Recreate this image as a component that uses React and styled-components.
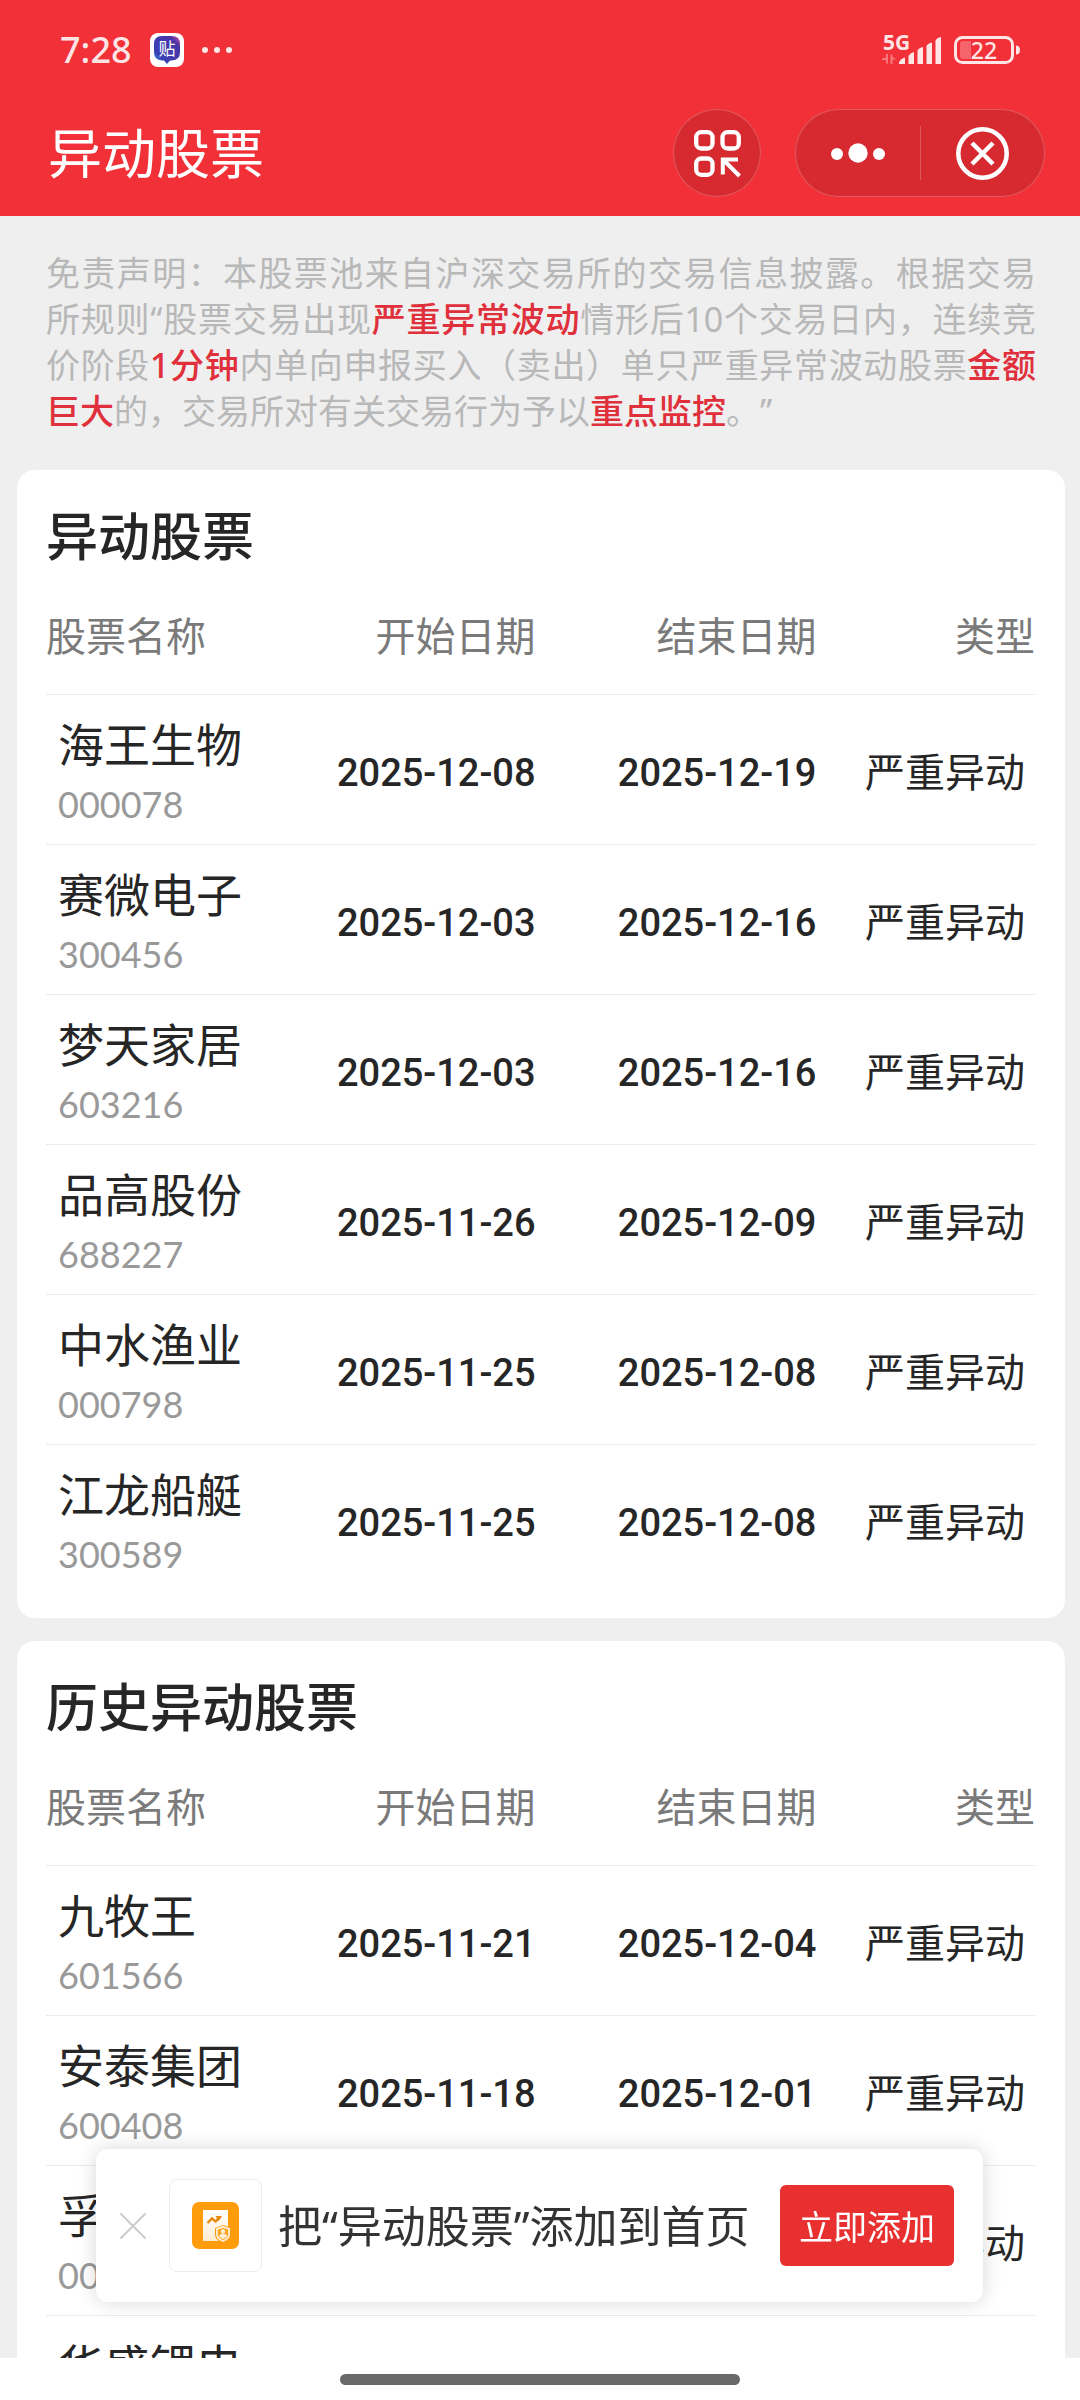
import styled, { createGlobalStyle } from "styled-components";

const GlobalStyle = createGlobalStyle`
  * {
    box-sizing: border-box;
  }

  body {
    margin: 0;
    background: #fff;
    color: #262626;
    font-family: "Noto Sans", "Noto Sans CJK SC", sans-serif;
    font-weight: 400;
  }

  button {
    border: none;
    padding: 0;
    background: none;
    color: inherit;
    font: inherit;
    cursor: pointer;
  }

  h1, h2, p {
    margin: 0;
  }

  svg {
    display: block;
    overflow: visible;
  }
`;

const Page = styled.div`
  height: 100vh;
  display: flex;
  flex-direction: column;
`;

const Header = styled.header`
  background: #f23038;
  color: #fff;
`;

const StatusBar = styled.div`
  display: flex;
  justify-content: space-between;
  align-items: center;
  height: 100px;
  padding: 0 60px;
  color: rgba(255, 255, 255, 0.88);
`;

const StatusGroup = styled.div`
  display: flex;
  align-items: center;
  gap: ${(props) => props.$gap}px;
`;

const Clock = styled.time`
  font-family: "Noto Sans", sans-serif;
  font-size: 36px;
  line-height: 48px;
  font-weight: 500;
`;

const TitleBar = styled.div`
  display: flex;
  align-items: center;
  height: 116px;
  padding: 0 35px 10px 48px;
`;

const PageTitle = styled.h1`
  flex: 1;
  font-size: 54px;
  line-height: 72px;
  font-weight: 400;
`;

const RoundButton = styled.button`
  display: grid;
  place-items: center;
  width: 88px;
  height: 88px;
  margin-right: 34px;
  border: 1px solid rgba(255, 255, 255, 0.22);
  border-radius: 50%;
  background: #d62a30;
`;

const Capsule = styled.div`
  display: flex;
  align-items: center;
  height: 88px;
  border: 1px solid rgba(255, 255, 255, 0.22);
  border-radius: 44px;
  background: #d62a30;
`;

const CapsuleButton = styled.button`
  display: grid;
  place-items: center;
  width: 124px;
  height: 54px;

  & + & {
    border-left: 1px solid rgba(255, 255, 255, 0.22);
  }
`;

const Content = styled.main`
  flex: 1;
  min-height: 0;
  overflow-y: auto;
  scrollbar-width: none;
  background: #efefef;
`;

const Disclaimer = styled.p`
  padding: 34px 44px 36px 46px;
  color: #b8b8b8;
  font-size: 34px;
  line-height: 46px;
  text-align: justify;
  text-spacing-trim: space-all;
`;

const NoBreak = styled.span`
  white-space: nowrap;
`;

const Highlight = styled.strong`
  color: #e0303c;
  font-weight: 500;
`;

const Card = styled.section`
  margin: 0 15px 23px 17px;
  padding: 30px 30px 24px 29px;
  border-radius: 18px;
  background: #fff;
`;

const CardTitle = styled.h2`
  font-size: 52px;
  line-height: 72px;
  font-weight: 500;
`;

const Table = styled.table`
  width: 100%;
  table-layout: fixed;
  border-collapse: separate;
  border-spacing: 0;
  white-space: nowrap;
`;

const Th = styled.th`
  width: ${(props) => props.$width};
  padding: 34px 0 28px;
  color: #7a7a7a;
  font-size: 40px;
  line-height: 60px;
  font-weight: 400;
  text-align: ${(props) => props.$align || "right"};
`;

const Td = styled.td`
  padding: 5px 0 0;
  border-top: 1px solid #ebebeb;
  font-size: 40px;
  line-height: 60px;
  text-align: right;
`;

const NameCell = styled(Td)`
  padding: 19px 0 10px 12px;
  text-align: left;
`;

const TypeCell = styled(Td)`
  padding-right: 10px;
`;

const StockName = styled.div`
  font-size: 46px;
`;

const StockCode = styled.div`
  color: #999;
  font-family: Lato, sans-serif;
  font-size: 36px;
`;

const DateText = styled.time`
  font-family: Roboto, sans-serif;
  font-size: 38px;
  font-weight: 500;
`;

const BottomArea = styled.footer`
  position: relative;
  display: flex;
  justify-content: center;
  height: 42px;
  padding-top: 16px;
  background: #fff;
`;

const HomeBar = styled.div`
  width: 37%;
  height: 11px;
  border-radius: 6px;
  background: #696969;
`;

const Toast = styled.div`
  position: absolute;
  left: 96px;
  right: 97px;
  bottom: 98px;
  display: flex;
  align-items: center;
  height: 153px;
  padding: 0 29px 0 24px;
  border-radius: 12px;
  background: #fff;
  box-shadow: 0 0 20px rgba(0, 0, 0, 0.16);
`;

const ToastIcon = styled.div`
  display: grid;
  place-items: center;
  width: 93px;
  height: 93px;
  margin: 0 16px 0 23px;
  border: 1px solid #ececec;
  border-radius: 8px;
`;

const ToastText = styled.p`
  flex: 1;
  color: #333;
  font-size: 44px;
  line-height: 60px;
  white-space: nowrap;
`;

const AddButton = styled.button`
  width: 174px;
  height: 81px;
  border-radius: 6px;
  background: #e83030;
  color: #fff;
  font-size: 34px;
`;

const currentStocks = [
  { name: "海王生物", code: "000078", start: "2025-12-08", end: "2025-12-19" },
  { name: "赛微电子", code: "300456", start: "2025-12-03", end: "2025-12-16" },
  { name: "梦天家居", code: "603216", start: "2025-12-03", end: "2025-12-16" },
  { name: "品高股份", code: "688227", start: "2025-11-26", end: "2025-12-09" },
  { name: "中水渔业", code: "000798", start: "2025-11-25", end: "2025-12-08" },
  { name: "江龙船艇", code: "300589", start: "2025-11-25", end: "2025-12-08" },
];

const historyStocks = [
  { name: "九牧王", code: "601566", start: "2025-11-21", end: "2025-12-04" },
  { name: "安泰集团", code: "600408", start: "2025-11-18", end: "2025-12-01" },
  { name: "孚日股份", code: "002083", start: "2025-11-17", end: "2025-11-28" },
  { name: "华盛锂电", code: "688353", start: "2025-11-17", end: "2025-11-28" },
];

function AppBadge() {
  return (
    <svg width="34" height="34" viewBox="0 0 34 34">
      <defs>
        <linearGradient id="bubble" x1="0" y1="1" x2="1" y2="0">
          <stop offset="0" stopColor="#2bb0f0" />
          <stop offset="0.25" stopColor="#3a3fb4" />
          <stop offset="0.8" stopColor="#4a35a8" />
          <stop offset="1" stopColor="#f0529a" />
        </linearGradient>
      </defs>
      <rect width="34" height="34" rx="8" fill="#fff" />
      <path
        d="M12 3h10q8 0 8 8v8q0 8-8 8.500h-2l-3 3.500-3-3.500h-2q-8-.5-8-8.500v-8q0-8 8-8z"
        fill="url(#bubble)"
      />
      <text x="17" y="22" fill="#fff" fontSize="17" textAnchor="middle">
        贴
      </text>
    </svg>
  );
}

function MoreDots() {
  return (
    <svg width="30" height="6" viewBox="0 0 30 6" fill="currentColor">
      <circle cx="3" cy="3" r="3" />
      <circle cx="15" cy="3" r="3" />
      <circle cx="27" cy="3" r="3" />
    </svg>
  );
}

function Signal() {
  return (
    <svg width="60" height="32" viewBox="0 0 60 32" fill="currentColor">
      <text
        x="1"
        y="16"
        fontFamily="Noto Sans, sans-serif"
        fontSize="21"
        fontWeight="700"
      >
        5G
      </text>
      <path
        d="M6 20v9.500H4v-3.500H0v-1.500L4 23.500V20zM8.500 30V20.500h1.800v2l3.700 3h-3.500V30z"
        opacity="0.4"
      />
      <path d="M17 28.500q1.500-4 6-5V30h-6zM26.500 22q1.500-3 5.500-4V30h-5.500zM35.500 16.500q1.500-3 5.500-3.500V30h-5.500zM44.500 12q1.500-3 5.500-3.500V30h-5.500zM53.500 6.500q1.500-3 5.500-3.500V30h-5.500z" />
    </svg>
  );
}

function Battery() {
  return (
    <svg width="66" height="28" viewBox="0 0 66 28">
      <rect
        x="1.500"
        y="1.500"
        width="57"
        height="25"
        rx="7"
        fill="none"
        stroke="currentColor"
        strokeWidth="3"
      />
      <path d="M9 5h8v18H9q-3 0-3-3V8q0-3 3-3z" fill="#fff" opacity="0.25" />
      <path d="M62 9.500q4 0 4 4.500t-4 4.500z" fill="currentColor" />
      <text
        x="30"
        y="23"
        fill="currentColor"
        fontFamily="Noto Sans, sans-serif"
        fontSize="23"
        fontWeight="500"
        textAnchor="middle"
      >
        22
      </text>
    </svg>
  );
}

function ScanIcon() {
  return (
    <svg
      width="47"
      height="47"
      viewBox="0 0 47 47"
      fill="none"
      stroke="#fff"
      strokeWidth="4.300"
    >
      <rect x="2.200" y="2.200" width="16.300" height="16.300" rx="5" />
      <rect x="28.500" y="2.200" width="16.300" height="16.300" rx="5" />
      <rect x="2.200" y="28.500" width="16.300" height="16.300" rx="5" />
      <path d="M44 29.500H28.800V44.500M29 29.500L45.500 46" strokeWidth="4" />
    </svg>
  );
}

function MenuIcon() {
  return (
    <svg width="54" height="20" viewBox="0 0 54 20" fill="#fff">
      <circle cx="6" cy="11" r="6" />
      <circle cx="27" cy="10" r="9.700" />
      <circle cx="48" cy="11" r="6" />
    </svg>
  );
}

function ExitIcon() {
  return (
    <svg width="53" height="53" viewBox="0 0 53 53" fill="none" stroke="#fff">
      <circle cx="26.500" cy="26.500" r="24.200" strokeWidth="4.500" />
      <path d="M16 16l21 21M37 16L16 37" strokeWidth="4.500" />
    </svg>
  );
}

function CloseIcon() {
  return (
    <svg width="26" height="26" viewBox="0 0 26 26">
      <path
        d="M1 1l24 24M25 1L1 25"
        stroke="#ccc"
        strokeWidth="2"
        strokeLinecap="round"
      />
    </svg>
  );
}

function StockPoolIcon() {
  return (
    <svg width="47" height="47" viewBox="0 0 47 47">
      <defs>
        <linearGradient id="sheet" x1="0" y1="0" x2="0" y2="1">
          <stop offset="0" stopColor="#fff" />
          <stop offset="1" stopColor="#ffecd2" />
        </linearGradient>
      </defs>
      <rect width="47" height="47" rx="7" fill="#ff9c0c" />
      <rect x="11" y="8" width="25" height="31" fill="url(#sheet)" />
      <path
        d="M15.500 21l4.500-4.500 3.500 3L28 15.500"
        fill="none"
        stroke="#e88a10"
        strokeWidth="2.400"
      />
      <path d="M23.500 14h6.500l-3.500 5z" fill="#e88a10" />
      <path
        d="M31 24.500l6.500 2.500v5.500q0 4.500-6.500 7-6.500-2.500-6.500-7V27z"
        fill="#ff9c0c"
        stroke="#ff9c0c"
        strokeWidth="3"
      />
      <path
        d="M31 24.800l6 2.200v5.500q0 4-6 6.500-6-2.500-6-6.500V27z"
        fill="#ffa21a"
        stroke="#fff1dc"
        strokeWidth="1.800"
      />
      <circle cx="31" cy="29.500" r="2.200" fill="#fff1dc" />
      <path d="M27 34q0-2 4-2t4 2q-1.500 2-4 3-2.500-1-4-3z" fill="#fff1dc" />
    </svg>
  );
}

function StockTable({ title, stocks }) {
  return (
    <Card>
      <CardTitle>{title}</CardTitle>
      <Table aria-label={title}>
        <thead>
          <tr>
            <Th $width="22%" $align="left">
              股票名称
            </Th>
            <Th $width="27.5%">开始日期</Th>
            <Th $width="28.4%">结束日期</Th>
            <Th $width="22.1%">类型</Th>
          </tr>
        </thead>
        <tbody>
          {stocks.map((stock) => (
            <tr key={stock.code}>
              <NameCell>
                <StockName>{stock.name}</StockName>
                <StockCode>{stock.code}</StockCode>
              </NameCell>
              <Td>
                <DateText>{stock.start}</DateText>
              </Td>
              <Td>
                <DateText>{stock.end}</DateText>
              </Td>
              <TypeCell>严重异动</TypeCell>
            </tr>
          ))}
        </tbody>
      </Table>
    </Card>
  );
}

function App() {
  return (
    <Page lang="zh-CN">
      <GlobalStyle />
      <Header>
        <StatusBar>
          <StatusGroup $gap={18}>
            <Clock>7:28</Clock>
            <AppBadge />
            <MoreDots />
          </StatusGroup>
          <StatusGroup $gap={12}>
            <Signal />
            <Battery />
          </StatusGroup>
        </StatusBar>
        <TitleBar>
          <PageTitle>异动股票</PageTitle>
          <RoundButton aria-label="扫一扫">
            <ScanIcon />
          </RoundButton>
          <Capsule>
            <CapsuleButton aria-label="更多">
              <MenuIcon />
            </CapsuleButton>
            <CapsuleButton aria-label="退出">
              <ExitIcon />
            </CapsuleButton>
          </Capsule>
        </TitleBar>
      </Header>

      <Content>
        <Disclaimer>
          免责声明：本股票池来自沪深交易所的交易信息披露。根据交易
          <NoBreak>所规则</NoBreak>“股票交易出现
          <Highlight>严重异常波动</Highlight>
          情形后10个交易日内，连续竞价阶段
          <Highlight>1分钟</Highlight>
          内单向申报买入（卖出）单只严重异常波动股票
          <Highlight>金额巨大</Highlight>
          的，交易所对有关交易行为予以
          <Highlight>重点监控</Highlight>。”
        </Disclaimer>
        <StockTable title="异动股票" stocks={currentStocks} />
        <StockTable title="历史异动股票" stocks={historyStocks} />
      </Content>

      <BottomArea>
        <HomeBar />
        <Toast>
          <button aria-label="关闭">
            <CloseIcon />
          </button>
          <ToastIcon>
            <StockPoolIcon />
          </ToastIcon>
          <ToastText>把“异动股票”添加到首页</ToastText>
          <AddButton>立即添加</AddButton>
        </Toast>
      </BottomArea>
    </Page>
  );
}

export default App;
